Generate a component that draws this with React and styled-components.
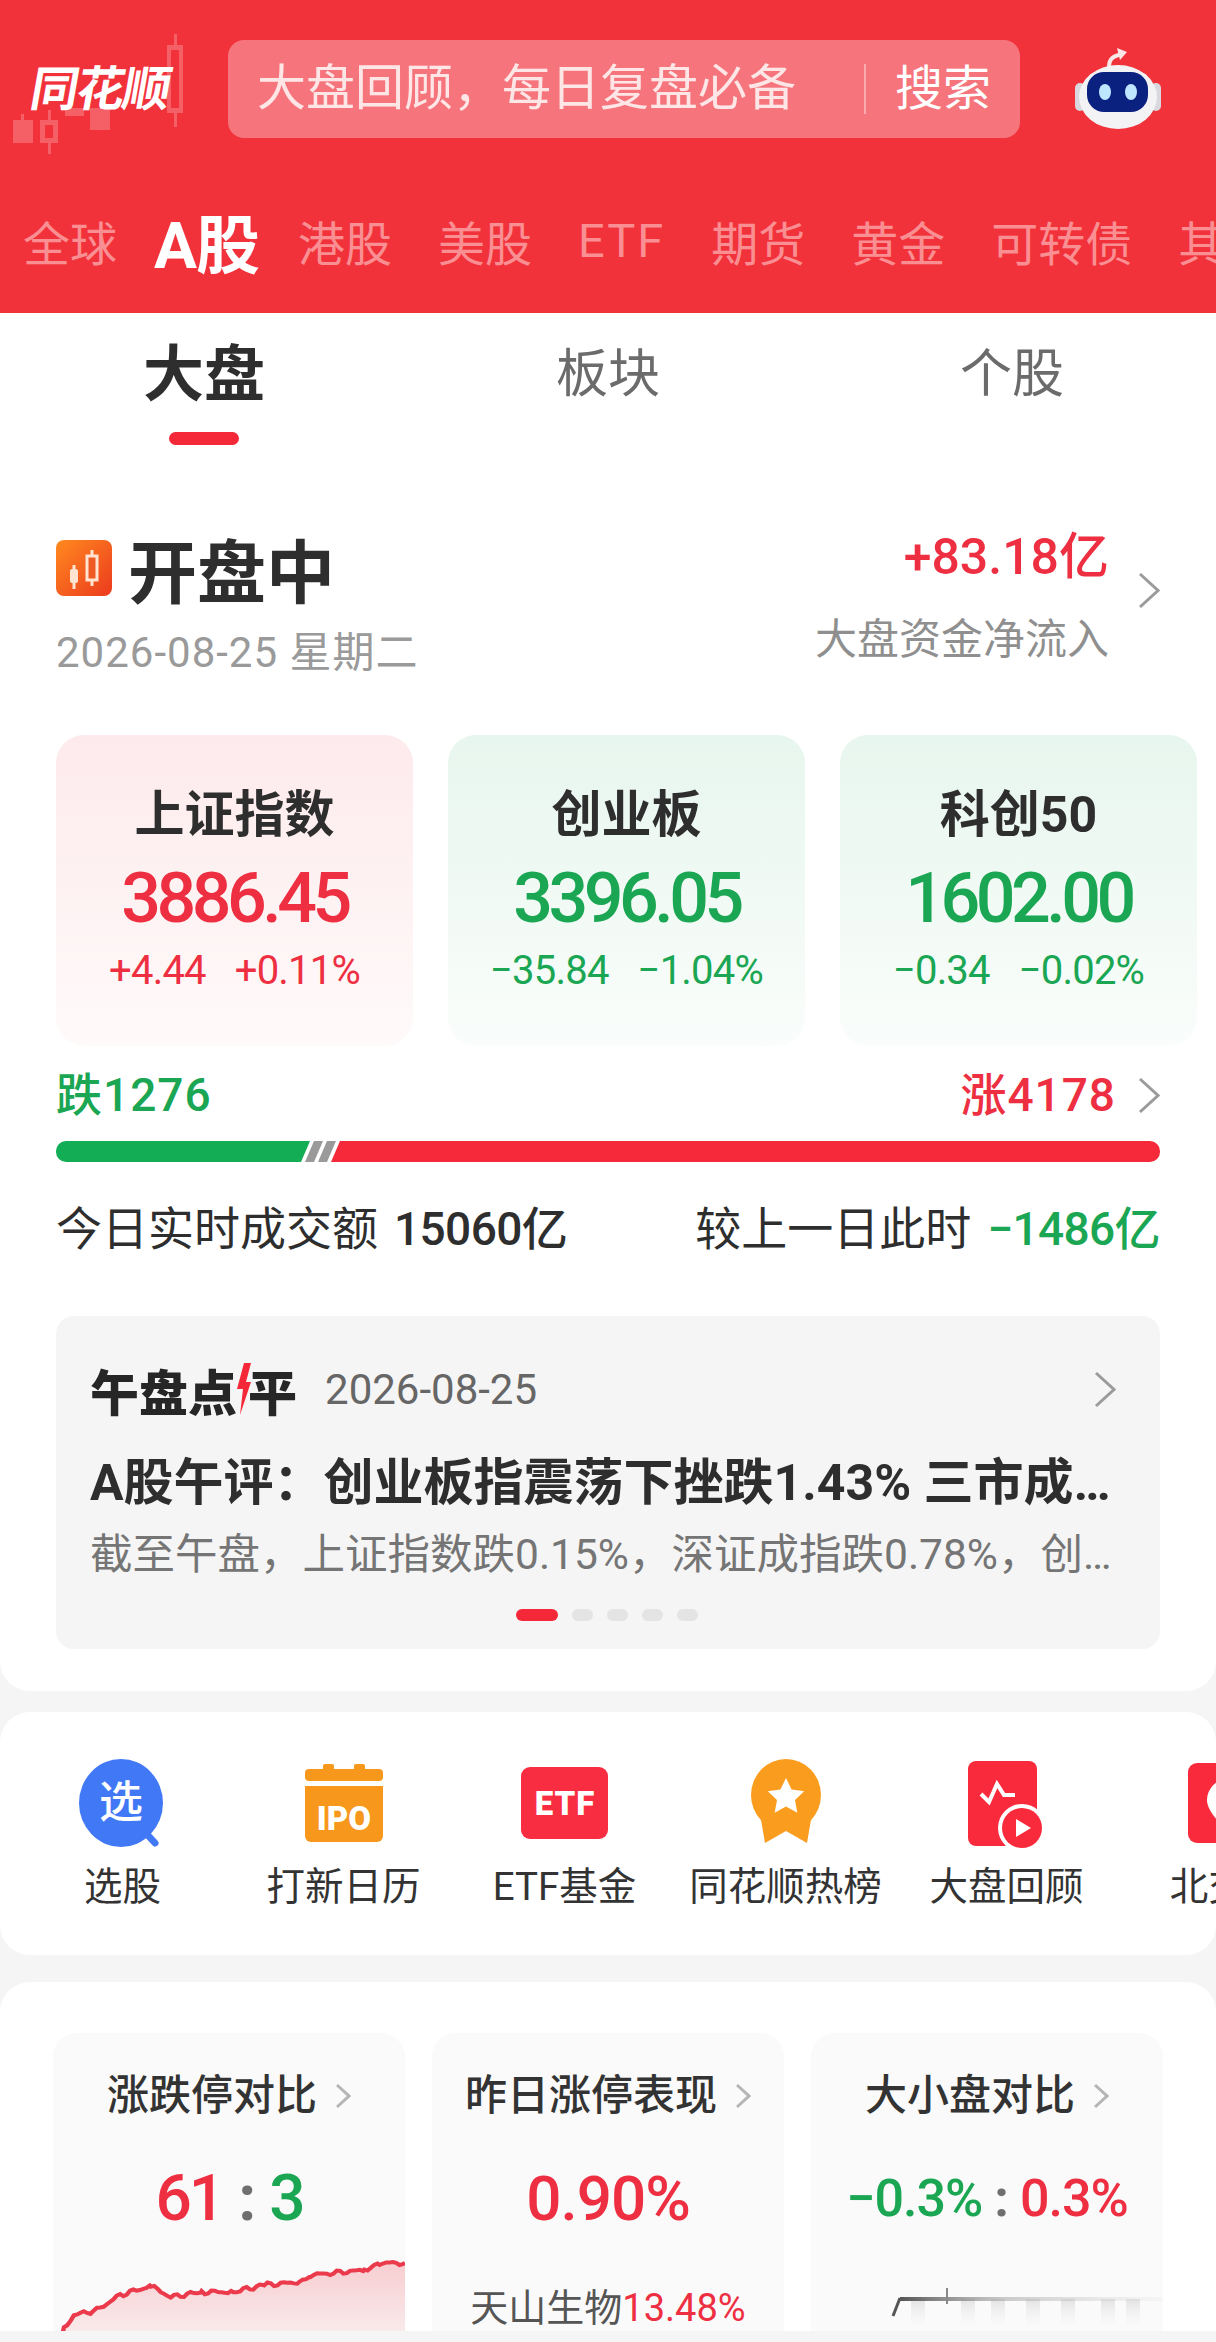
import React from "react";
import styled, { createGlobalStyle } from "styled-components";

const RED = "#ee2f42";
const GREEN = "#1aa653";

const GlobalStyle = createGlobalStyle`
  html, body {
    margin: 0;
    padding: 0;
    background: #f5f5f5;
    font-family: Roboto, "Noto Sans CJK SC", sans-serif;
    color: #2e2e2e;
  }
  * { box-sizing: border-box; }
`;

const Page = styled.div`
  width: 1216px;
  height: 2342px;
  overflow: hidden;
  background: #f5f5f5;
`;

const Header = styled.header`
  height: 313px;
  background: #f2323b;
  overflow: hidden;
`;

const TopBar = styled.div`
  display: flex;
  align-items: stretch;
  height: 138px;
  padding-top: 40px;
`;

const Logo = styled.div`
  position: relative;
  flex: none;
  width: 228px;
`;

const LogoCandles = styled.svg`
  position: absolute;
  left: 0;
  top: -40px;
`;

const LogoText = styled.div`
  position: absolute;
  left: 31px;
  top: 26px;
  font-size: 48px;
  line-height: 48px;
  font-weight: 700;
  color: #fff;
  letter-spacing: -2px;
  white-space: nowrap;
  transform: skewX(-10deg);
`;

const SearchBox = styled.div`
  flex: none;
  display: flex;
  align-items: center;
  width: 792px;
  padding-left: 29px;
  background: #f6757c;
  border-radius: 16px;
  color: rgba(255, 255, 255, 0.82);
  font-size: 49px;
  line-height: 60px;
`;

const SearchHint = styled.span`
  flex: none;
  width: 607px;
`;

const SearchButton = styled.span`
  flex: none;
  padding-left: 29px;
  border-left: 2px solid rgba(255, 255, 255, 0.4);
  height: 50px;
  line-height: 50px;
  font-size: 48px;
  color: #fff;
`;

const RobotBox = styled.div`
  flex: none;
  margin: 3px 0 0 53px;
`;

const MarketTabs = styled.nav`
  display: flex;
  align-items: center;
  gap: 46px;
  margin-top: 72px;
  padding-left: 23px;
  height: 60px;
  white-space: nowrap;
`;

const MarketTab = styled.span`
  flex: none;
  font-size: ${(p) => (p.$active ? "64px" : "47px")};
  font-weight: ${(p) => (p.$active ? 700 : 400)};
  letter-spacing: ${(p) => (p.$latin ? "2px" : p.$active ? "-1px" : "0")};
  margin: ${(p) => (p.$active ? "0 -7px 0 -9px" : "0")};
  color: ${(p) => (p.$active ? "#fff" : "#fa8f93")};
`;

const MainCard = styled.section`
  background: #fff;
  border-radius: 0 0 30px 30px;
  padding-bottom: 42px;
`;

const SubTabs = styled.div`
  display: grid;
  grid-template-columns: repeat(3, 1fr);
  padding: 32px 2px 0;
`;

const SubTab = styled.div`
  display: flex;
  flex-direction: column;
  align-items: center;
  font-size: ${(p) => (p.$active ? "61px" : "52px")};
  font-weight: ${(p) => (p.$active ? 700 : 400)};
  line-height: 60px;
  color: ${(p) => (p.$active ? "#2e2e2e" : "#6b6b6b")};
`;

const SubTabMark = styled.i`
  display: block;
  width: 70px;
  height: 13px;
  margin-top: 27px;
  border-radius: 7px;
  background: ${(p) => (p.$on ? "#f5283a" : "transparent")};
`;

const StatusRow = styled.div`
  display: flex;
  justify-content: space-between;
  margin-top: 83px;
  padding: 0 56px;
`;

const StatusTitle = styled.div`
  display: flex;
  align-items: center;
  gap: 16px;
  height: 80px;
  font-size: 69px;
  font-weight: 700;
`;

const StatusDate = styled.div`
  margin-top: 20px;
  font-size: 42px;
  line-height: 50px;
  letter-spacing: 1px;
  color: #9a9a9a;
`;

const FlowBlock = styled.div`
  display: flex;
  align-items: flex-start;
  gap: 29px;
`;

const FlowText = styled.div`
  text-align: right;
  margin-top: -1px;
`;

const FlowValue = styled.div`
  font-size: 50px;
  line-height: 60px;
  font-weight: 500;
  color: ${RED};
`;

const FlowLabel = styled.div`
  margin-top: 30px;
  font-size: 42px;
  line-height: 46px;
  color: #8f8f8f;
`;

const FlowChevron = styled.div`
  flex: none;
  margin-top: 44px;
`;

const IndexRow = styled.div`
  display: flex;
  gap: 35px;
  margin-top: 57px;
  padding-left: 56px;
`;

const IndexCard = styled.div`
  flex: none;
  width: 357px;
  height: 311px;
  padding-top: 50px;
  border-radius: 28px;
  text-align: center;
  background: linear-gradient(
    ${(p) => (p.$up ? "#fdeaec" : "#e7f6ee")},
    ${(p) => (p.$up ? "#fffafa" : "#fafdfb")}
  );
  color: ${(p) => (p.$up ? RED : GREEN)};
`;

const IndexName = styled.div`
  font-size: 50px;
  line-height: 60px;
  font-weight: 700;
  color: #2e2e2e;
`;

const IndexValue = styled.div`
  margin-top: 13px;
  font-size: 70px;
  line-height: 80px;
  font-weight: 500;
  letter-spacing: -4.5px;
`;

const IndexChange = styled.div`
  display: flex;
  justify-content: center;
  gap: 29px;
  margin-top: 8px;
  font-size: 40px;
  line-height: 50px;
  letter-spacing: -0.8px;
`;

const BreadthRow = styled.div`
  display: flex;
  justify-content: space-between;
  margin-top: 21px;
  padding: 0 56px;
  font-size: 46px;
  line-height: 56px;
  font-weight: 500;
  letter-spacing: 1px;
`;

const BreadthValue = styled.span`
  color: ${(p) => p.$color};
`;

const BreadthRight = styled.span`
  display: flex;
  align-items: center;
  gap: 22px;
  color: ${RED};
`;

const Bar = styled.div`
  display: flex;
  height: 21px;
  margin: 18px 56px 0;
`;

const BarPart = styled.div`
  flex: ${(p) => (p.$grow ? "1" : "none")};
  width: ${(p) => p.$w}px;
  margin-left: ${(p) => p.$ml || 0}px;
  background: ${(p) => p.$color};
  border-radius: ${(p) => p.$radius || 0};
  clip-path: ${(p) => p.$clip};
`;

const TurnoverRow = styled.div`
  display: flex;
  justify-content: space-between;
  margin-top: 39px;
  padding: 0 56px;
  font-size: 46px;
  line-height: 56px;
`;

const TurnoverValue = styled.span`
  margin-left: 16px;
  font-weight: 500;
  letter-spacing: -0.6px;
  color: ${(p) => p.$color || "inherit"};
`;

const NewsCard = styled.div`
  height: 333px;
  margin: 59px 56px 0;
  padding: 43px 34px 0;
  border-radius: 18px;
  background: #f5f5f5;
`;

const NewsHead = styled.div`
  display: flex;
  align-items: center;
  height: 60px;
  padding-right: 10px;
`;

const NewsBrand = styled.div`
  display: flex;
  align-items: center;
  font-size: 49px;
  font-weight: 900;
  color: #262626;
`;

const Bolt = styled.svg`
  flex: none;
  margin: 0 -3px 0 -2px;
`;

const NewsDate = styled.span`
  flex: 1;
  margin-left: 28px;
  font-size: 42px;
  color: #666;
`;

const NewsTitle = styled.div`
  margin-top: 34px;
  padding-right: 14px;
  font-size: 50px;
  line-height: 60px;
  font-weight: 700;
  white-space: nowrap;
  overflow: hidden;
  text-overflow: ellipsis;
`;

const NewsText = styled.div`
  margin-top: 15px;
  font-size: 42.5px;
  line-height: 54px;
  color: #757575;
  white-space: nowrap;
  overflow: hidden;
  text-overflow: ellipsis;
`;

const Dots = styled.div`
  display: flex;
  justify-content: center;
  gap: 14px;
  margin-top: 27px;
  padding-right: 3px;
`;

const Dot = styled.i`
  display: block;
  width: ${(p) => (p.$on ? "42px" : "21px")};
  height: 12px;
  border-radius: 6px;
  background: ${(p) => (p.$on ? "#f5283a" : "#e4e4e4")};
`;

const ShortcutCard = styled.section`
  display: flex;
  height: 243px;
  margin-top: 21px;
  padding: 47px 0 0 12px;
  border-radius: 30px;
  background: #fff;
  overflow: hidden;
`;

const Shortcut = styled.div`
  flex: none;
  display: flex;
  flex-direction: column;
  align-items: center;
  width: 221px;
`;

const ShortcutLabel = styled.div`
  margin-top: 13px;
  font-size: 38.5px;
  line-height: 50px;
  color: #333;
  white-space: nowrap;
`;

const TileCard = styled.section`
  display: flex;
  gap: 27px;
  height: 349px;
  margin-top: 27px;
  padding: 51px 0 0 53px;
  border-radius: 30px 30px 0 0;
  background: #fff;
  overflow: hidden;
`;

const Tile = styled.div`
  flex: none;
  width: 352px;
  height: 320px;
  padding-top: 33px;
  border-radius: 24px 24px 0 0;
  background: #fafafa;
  text-align: center;
  overflow: hidden;
`;

const TileTitle = styled.div`
  display: flex;
  justify-content: center;
  align-items: center;
  gap: 18px;
  font-size: 42px;
  line-height: 60px;
  font-weight: 500;
  color: #333;
`;

const TileValue = styled.div`
  display: flex;
  justify-content: center;
  align-items: center;
  gap: ${(p) => p.$gap || 0}px;
  height: 80px;
  margin-top: 32px;
  font-size: ${(p) => p.$size || 62}px;
  font-weight: 500;
  letter-spacing: ${(p) => p.$track ?? -1}px;
`;

const Tone = styled.span`
  color: ${(p) => p.$color};
`;

const Colon = styled.span`
  color: #6f6f6f;
  font-weight: 700;
`;

const TileChart = styled.svg`
  display: block;
  margin-top: ${(p) => p.$top}px;
`;

const TileStock = styled.div`
  margin-top: 45px;
  font-size: 38px;
  line-height: 50px;
  color: #555;
  white-space: nowrap;
`;

const ChevronSvg = styled.svg`
  display: block;
  flex: none;
`;

const Chevron = ({ w = 22, h = 37, color = "#9b9b9b", sw = 3 }) => (
  <ChevronSvg width={w} height={h} viewBox={`0 0 ${w} ${h}`} fill="none">
    <path d={`M2 2 L${w - 2} ${h / 2} L2 ${h - 2}`} stroke={color} strokeWidth={sw} />
  </ChevronSvg>
);

const CandleBadge = () => (
  <svg width="56" height="56" viewBox="0 0 56 56">
    <defs>
      <linearGradient id="badge" x1="0" y1="0" x2="1" y2="1">
        <stop offset="0" stopColor="#ff8a1f" />
        <stop offset="1" stopColor="#ec3a1e" />
      </linearGradient>
    </defs>
    <rect width="56" height="56" rx="8" fill="url(#badge)" />
    <path d="M18 25v24M36 10v36" stroke="#ffe3d0" strokeWidth="3" />
    <rect x="14" y="29" width="8" height="14" rx="2" fill="#ffe3d0" />
    <rect x="31" y="16" width="10" height="24" fill="#ef5a24" stroke="#ffe3d0" strokeWidth="3" />
  </svg>
);

const BotIcon = () => (
  <svg width="90" height="90" viewBox="0 0 90 90">
    <path d="M36 24c0-9 5-11 13-13" fill="none" stroke="#fbe7e8" strokeWidth="4" />
    <path d="M44 5l10 4-7 8z" fill="#fbe7e8" />
    <rect x="2" y="40" width="10" height="28" rx="5" fill="#d8d8de" />
    <rect x="78" y="40" width="10" height="28" rx="5" fill="#d8d8de" />
    <ellipse cx="45" cy="54" rx="39" ry="32" fill="#f3f3f6" />
    <rect x="14" y="29" width="61" height="40" rx="17" fill="#0b2180" />
    <ellipse cx="32" cy="49" rx="6" ry="8" fill="#bfe6ff" />
    <ellipse cx="58" cy="49" rx="6" ry="8" fill="#bfe6ff" />
  </svg>
);

const PickIcon = () => (
  <svg width="90" height="90" viewBox="0 0 90 90">
    <path d="M66 72l11 12" stroke="#4078f5" strokeWidth="7" strokeLinecap="round" />
    <ellipse cx="43" cy="44" rx="42" ry="44" fill="#4078f5" />
    <text x="43" y="59" textAnchor="middle" fontSize="44" fontWeight="500" fill="#fff">选</text>
  </svg>
);

const IpoIcon = () => (
  <svg width="90" height="90" viewBox="0 0 90 90">
    <rect x="24" y="5" width="11" height="8" rx="2" fill="#f7981d" />
    <rect x="55" y="5" width="11" height="8" rx="2" fill="#f7981d" />
    <rect x="6" y="10" width="78" height="12" rx="4" fill="#f7981d" />
    <path d="M6 27h78v50a6 6 0 0 1-6 6H12a6 6 0 0 1-6-6z" fill="#f7981d" />
    <text x="45" y="71" textAnchor="middle" fontSize="33" fontWeight="900" fill="#fff">IPO</text>
  </svg>
);

const EtfIcon = () => (
  <svg width="90" height="90" viewBox="0 0 90 90">
    <rect x="1" y="8" width="87" height="72" rx="9" fill="#f92d41" />
    <text x="45" y="56" textAnchor="middle" fontSize="33" fontWeight="900" letterSpacing="1" fill="#fff">ETF</text>
  </svg>
);

const MedalIcon = () => (
  <svg width="90" height="90" viewBox="0 0 90 90">
    <path d="M19 55l5 29 21-12 21 12 5-29z" fill="#fa9d1f" />
    <ellipse cx="45" cy="36" rx="35" ry="36" fill="#fa9d1f" />
    <path d="M45 19l5.600 11.600 12.600 1.700-9.200 8.800 2.300 12.600L45 47.600l-11.300 6.100L36 41.100l-9.200-8.800 12.600-1.700z" fill="#fff" />
  </svg>
);

const ReviewIcon = () => (
  <svg width="90" height="90" viewBox="0 0 90 90">
    <rect x="6" y="2" width="69" height="85" rx="8" fill="#fa2a3d" />
    <path d="M19 35l8 8 8-18 7 11h11" fill="none" stroke="#fff" strokeWidth="4" />
    <circle cx="60" cy="69" r="24" fill="#fff" />
    <circle cx="60" cy="69" r="20" fill="#fa2a3d" />
    <path d="M54 60l15 9-15 9z" fill="#fff" />
  </svg>
);

const NorthIcon = () => (
  <svg width="90" height="90" viewBox="0 0 90 90">
    <rect x="5" y="4" width="80" height="80" rx="9" fill="#fa2a3d" />
    <path d="M45 20a21 21 0 0 1 21 21c0 14-21 30-21 30S24 55 24 41a21 21 0 0 1 21-21z" fill="#fff" />
  </svg>
);

const shortcuts = [
  { label: "选股", icon: <PickIcon /> },
  { label: "打新日历", icon: <IpoIcon /> },
  { label: "ETF基金", icon: <EtfIcon /> },
  { label: "同花顺热榜", icon: <MedalIcon /> },
  { label: "大盘回顾", icon: <ReviewIcon /> },
  { label: "北交所", icon: <NorthIcon /> },
];

const indices = [
  { name: "上证指数", value: "3886.45", diff: "+4.44", pct: "+0.11%", up: true },
  { name: "创业板", value: "3396.05", diff: "−35.84", pct: "−1.04%" },
  { name: "科创50", value: "1602.00", diff: "−0.34", pct: "−0.02%" },
];

// anchors read off the reference, the wiggle between them is just a fixed sine mix
const anchors = [
  [3, 98], [10, 76], [19, 62], [40, 57], [61, 42], [89, 33], [107, 44], [135, 39],
  [164, 39], [192, 32], [224, 29], [234, 22], [255, 20], [283, 17], [297, 10], [320, 10],
];

const buildLine = () => {
  const pts = [];
  for (let i = 0; i < anchors.length - 1; i++) {
    const [x0, y0] = anchors[i];
    const [x1, y1] = anchors[i + 1];
    for (let x = x0; x < x1; x += 3) {
      const t = (x - x0) / (x1 - x0);
      const wiggle = Math.sin(x * 1.7) * 1.5 + Math.sin(x * 0.6) * 1;
      pts.push(`${x},${(y0 + (y1 - y0) * t + wiggle).toFixed(1)}`);
    }
  }
  pts.push("320,10");
  return pts.join(" ");
};

const linePoints = buildLine();

const TrendChart = () => (
  <TileChart $top={15} width="352" height="100" viewBox="0 0 320 100" preserveAspectRatio="none">
    <defs>
      <linearGradient id="trend" x1="0" y1="0" x2="0" y2="1">
        <stop offset="0" stopColor="#f5a0a6" stopOpacity="0.5" />
        <stop offset="1" stopColor="#f5a0a6" stopOpacity="0.08" />
      </linearGradient>
    </defs>
    <polygon points={`${linePoints} 320,100 3,100`} fill="url(#trend)" />
    <polyline points={linePoints} fill="none" stroke="#ea3a4b" strokeWidth="4" />
  </TileChart>
);

// the third tile's line is hidden under a pale smudge at the bottom of the screenshot
const FadedChart = () => (
  <TileChart $top={47} width="352" height="46" viewBox="0 0 352 46">
    <defs>
      <linearGradient id="fade" x1="0" y1="0" x2="1" y2="0">
        <stop offset="0" stopColor="#555" />
        <stop offset="0.4" stopColor="#aaa" stopOpacity="0.6" />
        <stop offset="1" stopColor="#ccc" stopOpacity="0.1" />
      </linearGradient>
      <linearGradient id="smudge" x1="0" y1="0" x2="0" y2="1">
        <stop offset="0" stopColor="#d8d8d8" stopOpacity="0.7" />
        <stop offset="1" stopColor="#f0f0f0" stopOpacity="0.1" />
      </linearGradient>
    </defs>
    {[100, 150, 180, 215, 250, 290, 315].map((x) => (
      <rect key={x} x={x} y="14" width="14" height="26" fill="url(#smudge)" />
    ))}
    <path d="M82 31L89 13" stroke="#555" strokeWidth="3" fill="none" />
    <rect x="89" y="12" width="262" height="4" fill="url(#fade)" />
    <rect x="135" y="3" width="2" height="16" fill="#888" />
  </TileChart>
);

export default function App() {
  return (
    <Page>
      <GlobalStyle />
      <Header>
        <TopBar>
          <Logo>
            <LogoCandles width="228" height="180" viewBox="0 0 228 180" fill="#fff" fillOpacity="0.22">
              <rect x="13" y="120" width="20" height="23" />
              <rect x="21" y="114" width="3" height="6" />
              <path d="M40 120h18v23H40zM45 125v13h8v-13z" fillRule="evenodd" />
              <rect x="48" y="110" width="3" height="10" />
              <rect x="48" y="143" width="3" height="11" />
              <rect x="65" y="108" width="19" height="8" />
              <rect x="90" y="108" width="20" height="22" />
              <path d="M167 45h16v68h-16zM171 50v58h8V50z" fillRule="evenodd" />
              <rect x="174" y="34" width="3" height="11" />
              <rect x="174" y="113" width="3" height="14" />
            </LogoCandles>
            <LogoText>同花顺</LogoText>
          </Logo>
          <SearchBox>
            <SearchHint>大盘回顾，每日复盘必备</SearchHint>
            <SearchButton>搜索</SearchButton>
          </SearchBox>
          <RobotBox>
            <BotIcon />
          </RobotBox>
        </TopBar>
        <MarketTabs>
          <MarketTab>全球</MarketTab>
          <MarketTab $active>A股</MarketTab>
          <MarketTab>港股</MarketTab>
          <MarketTab>美股</MarketTab>
          <MarketTab $latin>ETF</MarketTab>
          <MarketTab>期货</MarketTab>
          <MarketTab>黄金</MarketTab>
          <MarketTab>可转债</MarketTab>
          <MarketTab>其他</MarketTab>
        </MarketTabs>
      </Header>

      <MainCard>
        <SubTabs>
          <SubTab $active>
            大盘
            <SubTabMark $on />
          </SubTab>
          <SubTab>
            板块
            <SubTabMark />
          </SubTab>
          <SubTab>
            个股
            <SubTabMark />
          </SubTab>
        </SubTabs>

        <StatusRow>
          <div>
            <StatusTitle>
              <CandleBadge />
              开盘中
            </StatusTitle>
            <StatusDate>2026-08-25 星期二</StatusDate>
          </div>
          <FlowBlock>
            <FlowText>
              <FlowValue>+83.18亿</FlowValue>
              <FlowLabel>大盘资金净流入</FlowLabel>
            </FlowText>
            <FlowChevron>
              <Chevron />
            </FlowChevron>
          </FlowBlock>
        </StatusRow>

        <IndexRow>
          {indices.map((item) => (
            <IndexCard key={item.name} $up={item.up}>
              <IndexName>{item.name}</IndexName>
              <IndexValue>{item.value}</IndexValue>
              <IndexChange>
                <span>{item.diff}</span>
                <span>{item.pct}</span>
              </IndexChange>
            </IndexCard>
          ))}
        </IndexRow>

        <BreadthRow>
          <BreadthValue $color={GREEN}>跌1276</BreadthValue>
          <BreadthRight>
            涨4178
            <Chevron />
          </BreadthRight>
        </BreadthRow>
        <Bar>
          <BarPart $w={254} $color="#12ad55" $radius="10px 0 0 10px" $clip="polygon(0 0, 100% 0, calc(100% - 9px) 100%, 0 100%)" />
          <BarPart $w={18} $ml={-5} $color="#9a9a9a" $clip="polygon(50% 0, 100% 0, 50% 100%, 0 100%)" />
          <BarPart $w={18} $ml={-5} $color="#9a9a9a" $clip="polygon(50% 0, 100% 0, 50% 100%, 0 100%)" />
          <BarPart $grow $ml={-5} $color="#f5293a" $radius="0 10px 10px 0" $clip="polygon(9px 0, 100% 0, 100% 100%, 0 100%)" />
        </Bar>
        <TurnoverRow>
          <span>
            今日实时成交额
            <TurnoverValue>15060亿</TurnoverValue>
          </span>
          <span>
            较上一日此时
            <TurnoverValue $color={GREEN}>−1486亿</TurnoverValue>
          </span>
        </TurnoverRow>

        <NewsCard>
          <NewsHead>
            <NewsBrand>
              午盘点
              <Bolt width="16" height="52" viewBox="0 0 16 52">
                <path d="M9 0h7l-5 19h5L5 52l3-26H2z" fill="#f5283a" />
              </Bolt>
              <span>平</span>
            </NewsBrand>
            <NewsDate>2026-08-25</NewsDate>
            <Chevron />
          </NewsHead>
          <NewsTitle>A股午评：创业板指震荡下挫跌1.43% 三市成交额不足万亿</NewsTitle>
          <NewsText>截至午盘，上证指数跌0.15%，深证成指跌0.78%，创业板指跌1.43%</NewsText>
          <Dots>
            <Dot $on />
            <Dot />
            <Dot />
            <Dot />
            <Dot />
          </Dots>
        </NewsCard>
      </MainCard>

      <ShortcutCard>
        {shortcuts.map((item) => (
          <Shortcut key={item.label}>
            {item.icon}
            <ShortcutLabel>{item.label}</ShortcutLabel>
          </Shortcut>
        ))}
      </ShortcutCard>

      <TileCard>
        <Tile>
          <TileTitle>
            涨跌停对比
            <Chevron w={16} h={26} color="#b5b5b5" />
          </TileTitle>
          <TileValue $size={64} $gap={16} $track={-3}>
            <Tone $color={RED}>61</Tone>
            <Colon>:</Colon>
            <Tone $color={GREEN}>3</Tone>
          </TileValue>
          <TrendChart />
        </Tile>
        <Tile>
          <TileTitle>
            昨日涨停表现
            <Chevron w={16} h={26} color="#b5b5b5" />
          </TileTitle>
          <TileValue>
            <Tone $color={RED}>0.90%</Tone>
          </TileValue>
          <TileStock>
            天山生物<Tone $color={RED}>13.48%</Tone>
          </TileStock>
        </Tile>
        <Tile>
          <TileTitle>
            大小盘对比
            <Chevron w={16} h={26} color="#b5b5b5" />
          </TileTitle>
          <TileValue $size={52} $gap={12}>
            <Tone $color={GREEN}>−0.3%</Tone>
            <Colon>:</Colon>
            <Tone $color={RED}>0.3%</Tone>
          </TileValue>
          <FadedChart />
        </Tile>
      </TileCard>
    </Page>
  );
}
